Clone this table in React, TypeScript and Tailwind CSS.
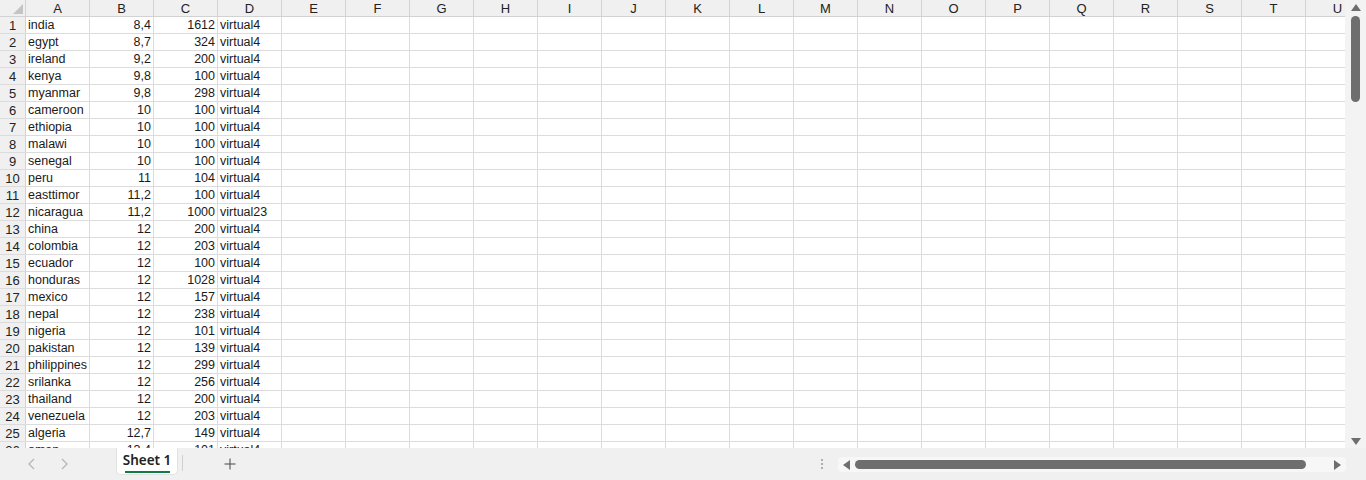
import React from "react";

const rows: [string, string, string, string][] = [
  ["india", "8,4", "1612", "virtual4"],
  ["egypt", "8,7", "324", "virtual4"],
  ["ireland", "9,2", "200", "virtual4"],
  ["kenya", "9,8", "100", "virtual4"],
  ["myanmar", "9,8", "298", "virtual4"],
  ["cameroon", "10", "100", "virtual4"],
  ["ethiopia", "10", "100", "virtual4"],
  ["malawi", "10", "100", "virtual4"],
  ["senegal", "10", "100", "virtual4"],
  ["peru", "11", "104", "virtual4"],
  ["easttimor", "11,2", "100", "virtual4"],
  ["nicaragua", "11,2", "1000", "virtual23"],
  ["china", "12", "200", "virtual4"],
  ["colombia", "12", "203", "virtual4"],
  ["ecuador", "12", "100", "virtual4"],
  ["honduras", "12", "1028", "virtual4"],
  ["mexico", "12", "157", "virtual4"],
  ["nepal", "12", "238", "virtual4"],
  ["nigeria", "12", "101", "virtual4"],
  ["pakistan", "12", "139", "virtual4"],
  ["philippines", "12", "299", "virtual4"],
  ["srilanka", "12", "256", "virtual4"],
  ["thailand", "12", "200", "virtual4"],
  ["venezuela", "12", "203", "virtual4"],
  ["algeria", "12,7", "149", "virtual4"],
  ["oman", "13,4", "101", "virtual4"],
];

const cols = "ABCDEFGHIJKLMNOPQRSTU".split("");

export default function App() {
  return (
    <div
      className="w-[1366px] h-[480px] flex flex-col bg-white overflow-hidden text-[#1a1a1a]"
      style={{ fontFamily: '"Liberation Sans", Arial, sans-serif' }}
    >
      <div className="flex h-[448px] overflow-hidden">
        <div className="flex-1 h-[448px] overflow-hidden">
          {/* header */}
          <div className="flex h-[17px] bg-[#f0f0f0] border-b border-[#d2d2d2]">
            <div className="w-[26px] shrink-0 border-r border-[#d2d2d2] relative">
              <svg className="absolute right-[2px] bottom-[2px]" width="10" height="10" viewBox="0 0 10 10">
                <polygon points="10,0 10,10 0,10" fill="#c4c4c4" />
              </svg>
            </div>
            {cols.map((c) => (
              <div
                key={c}
                className="w-[64px] shrink-0 border-r border-[#d2d2d2] flex items-center justify-center text-[13px] leading-none text-[#222] pt-[1px]"
              >
                {c}
              </div>
            ))}
          </div>
          {rows.map((r, i) => (
            <div key={i} className="flex h-[17px] border-b border-[#dcdcdc]">
              <div className="w-[26px] shrink-0 border-r border-[#d2d2d2] bg-[#f0f0f0] flex items-center justify-center text-[13px] leading-none text-[#222] pt-[1px]">
                {i + 1}
              </div>
              <div className="w-[64px] shrink-0 border-r border-[#dcdcdc] flex items-center pl-[2px] pt-[1px] text-[12.5px] leading-none whitespace-nowrap overflow-visible">
                {r[0]}
              </div>
              <div className="w-[64px] shrink-0 border-r border-[#dcdcdc] flex items-center justify-end pr-[2px] pt-[1px] text-[12.5px] leading-none">
                {r[1]}
              </div>
              <div className="w-[64px] shrink-0 border-r border-[#dcdcdc] flex items-center justify-end pr-[2px] pt-[1px] text-[12.5px] leading-none">
                {r[2]}
              </div>
              <div className="w-[64px] shrink-0 border-r border-[#dcdcdc] flex items-center pl-[2px] pt-[1px] text-[12.5px] leading-none whitespace-nowrap">
                {r[3]}
              </div>
              {cols.slice(4).map((c) => (
                <div key={c} className="w-[64px] shrink-0 border-r border-[#dcdcdc]" />
              ))}
            </div>
          ))}
        </div>
        {/* vertical scrollbar */}
        <div className="w-[21px] shrink-0 bg-[#f3f3f3] flex flex-col items-center">
          <svg className="mt-[4px]" width="10" height="7" viewBox="0 0 10 7">
            <polygon points="5,0 10,7 0,7" fill="#6e6e6e" />
          </svg>
          <div className="mt-[5px] w-[9px] h-[86px] rounded-full bg-[#6e6e6e]" />
          <div className="flex-1" />
          <svg className="mb-[3px]" width="10" height="7" viewBox="0 0 10 7">
            <polygon points="0,0 10,0 5,7" fill="#6e6e6e" />
          </svg>
        </div>
      </div>
      {/* bottom bar */}
      <div className="h-[32px] bg-[#f0f0f0] flex items-start relative">
        <div className="w-[116px] h-full flex items-center pl-[27px] gap-[22px] text-[#b4b4b4]">
          <svg width="10" height="12" viewBox="0 0 10 12">
            <polyline points="7,1 2,6 7,11" fill="none" stroke="#b4b4b4" strokeWidth="1.2" />
          </svg>
          <svg width="10" height="12" viewBox="0 0 10 12">
            <polyline points="3,1 8,6 3,11" fill="none" stroke="#b4b4b4" strokeWidth="1.2" />
          </svg>
        </div>
        <div className="w-[62px] h-[27px] bg-white rounded-b-[5px] border border-t-0 border-[#e2e2e2] flex flex-col items-center pt-[4px]">
          <span
            className="text-[13.5px] leading-[16px] font-semibold text-[#222]"
            style={{ fontFamily: '"Noto Sans", "Open Sans", sans-serif' }}
          >
            Sheet 1
          </span>
          <div className="w-[45px] h-[2px] bg-[#107c41] mt-[3px]" />
        </div>
        <div className="ml-[4px] mt-[7px] w-[1px] h-[16px] bg-[#cfcfcf]" />
        <div className="ml-[41px] h-full flex items-center">
          <svg width="12" height="12" viewBox="0 0 12 12">
            <line x1="6" y1="0.5" x2="6" y2="11.5" stroke="#555" strokeWidth="1.1" />
            <line x1="0.5" y1="6" x2="11.5" y2="6" stroke="#555" strokeWidth="1.1" />
          </svg>
        </div>
        <div className="flex-1" />
        <div className="h-full flex items-center mr-[14px]">
          <svg width="4" height="12" viewBox="0 0 4 12">
            <circle cx="2" cy="2" r="1" fill="#9a9a9a" />
            <circle cx="2" cy="6" r="1" fill="#9a9a9a" />
            <circle cx="2" cy="10" r="1" fill="#9a9a9a" />
          </svg>
        </div>
        <div className="mt-[9px] w-[508px] h-[15px] bg-[#f7f7f7] rounded-[4px] flex items-center mr-[20px]">
          <svg className="ml-[5px]" width="7" height="10" viewBox="0 0 7 10">
            <polygon points="7,0 7,10 0,5" fill="#6e6e6e" />
          </svg>
          <div className="ml-[5px] w-[451px] h-[9px] rounded-full bg-[#6e6e6e]" />
          <div className="flex-1" />
          <svg className="mr-[5px]" width="7" height="10" viewBox="0 0 7 10">
            <polygon points="0,0 7,5 0,10" fill="#6e6e6e" />
          </svg>
        </div>
      </div>
    </div>
  );
}
